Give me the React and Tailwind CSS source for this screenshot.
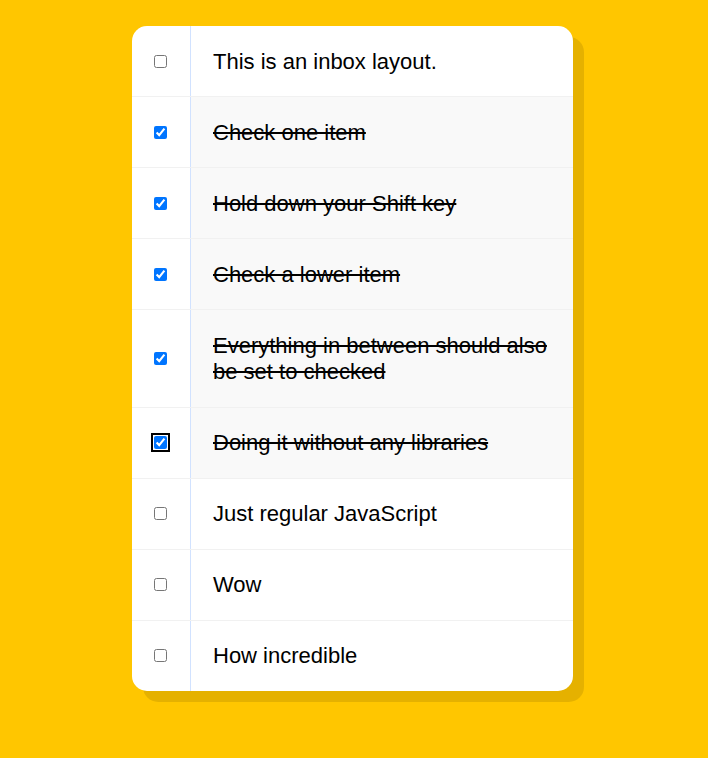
import React, { useState } from 'react';

const items = [
  'This is an inbox layout.',
  'Check one item',
  'Hold down your Shift key',
  'Check a lower item',
  'Everything in between should also be set to checked',
  'Doing it without any libraries',
  'Just regular JavaScript',
  'Wow',
  'How incredible',
];

const App = () => {
  const [checked, setChecked] = useState([false, true, true, true, true, true, false, false, false]);
  const [lastChecked, setLastChecked] = useState(5);

  // shift-click checks everything between the last box and this one
  const handleClick = (i, e) => {
    const next = [...checked];
    next[i] = !next[i];
    if (e.shiftKey && next[i] && lastChecked !== null) {
      const [a, b] = [Math.min(i, lastChecked), Math.max(i, lastChecked)];
      for (let k = a; k <= b; k++) next[k] = true;
    }
    setChecked(next);
    setLastChecked(i);
  };

  return (
    <div className="min-h-[758px] bg-[#ffc600] pt-[26px] pb-[50px]" style={{ fontFamily: '"Liberation Sans", Arial, sans-serif' }}>
      <div className="ml-[132px] w-[441px] overflow-hidden rounded-[15px] bg-white shadow-[11px_11px_0_rgba(0,0,0,0.1)]">
        {items.map((text, i) => (
          <div
            key={i}
            className={`flex items-center ${i < items.length - 1 ? 'border-b border-[#f1f1f1]' : ''}`}
          >
            <div className="flex w-[58px] shrink-0 items-center pl-[22px]">
              <input
                type="checkbox"
                checked={checked[i]}
                onChange={() => {}}
                onClick={(e) => handleClick(i, e)}
                className={`m-0 h-[13px] w-[13px] ${i === lastChecked ? 'rounded-[4px] outline-2 outline-offset-1 outline-black' : ''}`}
              />
            </div>
            <p
              className={`m-0 flex-1 border-l border-[#d1e2ff] px-[22px] pt-[22.5px] pb-[21.5px] text-[22px] leading-[26.1px] text-black ${checked[i] ? 'bg-[#f9f9f9] line-through' : ''}`}
            >
              {text}
            </p>
          </div>
        ))}
      </div>
    </div>
  );
};

export default App;
